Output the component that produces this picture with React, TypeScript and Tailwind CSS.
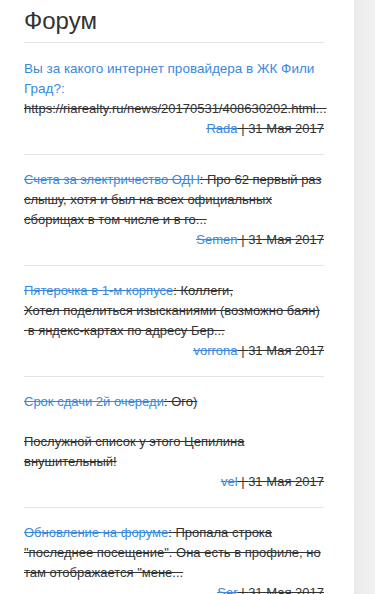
import React from 'react'

type Post = {
    title: string
    titleStruck: boolean
    body: React.ReactNode
    author: string
    date: string
}

const posts: Post[] = [
    {
        title: 'Вы за какого интернет провайдера в ЖК Фили Град?',
        titleStruck: false,
        body: (
            <>
                <span className="text-[13.5px] leading-4 text-[#3a89dc]">:</span>{' '}
                <span className="line-through">https://riarealty.ru/news/20170531/408630202.html...</span>
            </>
        ),
        author: 'Rada',
        date: '31 Мая 2017',
    },
    {
        title: 'Счета за электричество ОДН',
        titleStruck: true,
        body: (
            <span className="line-through">
                : Про 62 первый раз слышу, хотя и был на всех официальных сборищах в том числе и в го...
            </span>
        ),
        author: 'Semen',
        date: '31 Мая 2017',
    },
    {
        title: 'Пятерочка в 1-м корпусе',
        titleStruck: true,
        body: (
            <span className="line-through">
                : Коллеги,
                <br />
                Хотел поделиться изысканиями (возможно баян)
                <br />
                {'\u00a0'}в яндекс-картах по адресу Бер...
            </span>
        ),
        author: 'vorrona',
        date: '31 Мая 2017',
    },
    {
        title: 'Срок сдачи 2й очереди',
        titleStruck: true,
        body: (
            <span className="line-through">
                : Ого)
                <br />
                <br />
                Послужной список у этого Цепилина внушительный!
            </span>
        ),
        author: 'vel',
        date: '31 Мая 2017',
    },
    {
        title: 'Обновление на форуме',
        titleStruck: true,
        body: (
            <span className="line-through">
                : Пропала строка "последнее посещение". Она есть в профиле, но там отображается "мене...
            </span>
        ),
        author: 'Ser',
        date: '31 Мая 2017',
    },
]

export default function App() {
    return (
        <div
            className="flex h-[594px] w-[375px] overflow-hidden bg-[#f0f0f0]"
            style={{ fontFamily: '"Liberation Sans", Arial, sans-serif' }}
        >
            {/* Forum panel */}
            <div className="w-[354px] shrink-0 bg-white pl-6 pr-[30px] shadow-[1px_0_3px_rgba(0,0,0,0.06)]">
                <h2 className="border-b border-[#e5e5e5] pt-[8px] pb-[8px] text-[24px] leading-[26px] font-normal text-[#333]">
                    Форум
                </h2>

                {posts.map((post, i) => (
                    <div
                        key={post.author}
                        className={
                            i === 0
                                ? 'border-b border-[#e5e5e5] pt-[16px] pb-[15px] text-[13px] leading-5 text-[#333]'
                                : 'border-b border-[#e5e5e5] py-[15px] text-[13px] leading-5 text-[#333]'
                        }
                    >
                        <div>
                            <a
                                href="#"
                                className={
                                    post.titleStruck
                                        ? 'text-[#3a89dc] line-through'
                                        : 'text-[13.5px] leading-4 text-[#3a89dc]'
                                }
                            >
                                {post.title}
                            </a>
                            {post.body}
                        </div>
                        <div className="text-right line-through">
                            <a href="#" className="text-[#3a89dc] line-through">
                                {post.author}
                            </a>
                            <span> | {post.date}</span>
                        </div>
                    </div>
                ))}
            </div>

            {/* Side strip */}
            <div className="flex-1 bg-gradient-to-r from-[#ebebeb] to-[#f2f2f2]" />
        </div>
    )
}
